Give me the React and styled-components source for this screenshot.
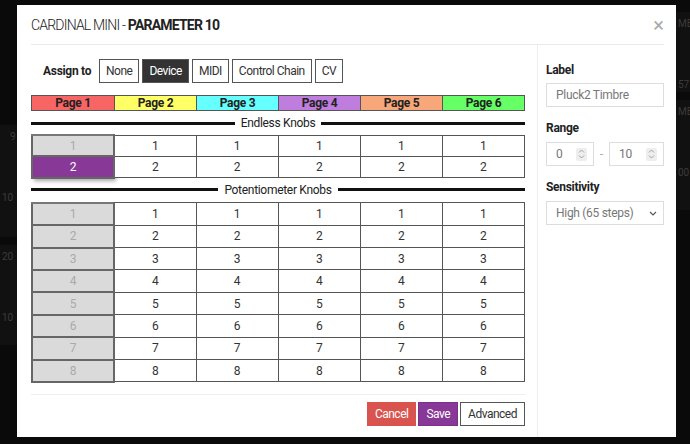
import React from "react";
import styled, { createGlobalStyle } from "styled-components";

const GlobalStyle = createGlobalStyle`
  html, body {
    margin: 0;
    padding: 0;
    background: #0a0a0a;
    font-family: Roboto, "Liberation Sans", sans-serif;
  }
  * { box-sizing: border-box; }
`;

const PAGES = [
  { name: "Page 1", color: "#f76565" },
  { name: "Page 2", color: "#ffff66" },
  { name: "Page 3", color: "#66ffff" },
  { name: "Page 4", color: "#bf7ddd" },
  { name: "Page 5", color: "#f7a779" },
  { name: "Page 6", color: "#66ff66" },
];

const Screen = styled.div`
  position: relative;
  width: 690px;
  height: 444px;
  overflow: hidden;
  background: #0a0a0a;
`;

/* pedalboard behind the dialog */
const Backdrop = styled.div`
  display: flex;
  justify-content: space-between;
  height: 100%;
`;

const BackColumn = styled.div`
  display: flex;
  flex-direction: column;
  width: ${(p) => p.$w}px;
  padding-top: ${(p) => p.$top}px;
  gap: 8px;
  overflow: hidden;
`;

const BackModule = styled.div`
  height: ${(p) => p.$h}px;
  background: #111;
  color: #3c3c3c;
  font-size: 10px;
  padding: 6px 2px;
  display: flex;
  flex-direction: column;
  gap: 50px;
  white-space: nowrap;
`;

const Overlay = styled.div`
  position: absolute;
  left: 17px;
  top: 5px;
  width: 659px;
  height: 432px;
  background: #fff;
  display: flex;
  flex-direction: column;
  padding: 0 12px 0 14px;
  color: #222;
`;

const Header = styled.div`
  height: 40px;
  display: flex;
  align-items: center;
  justify-content: space-between;
  border-bottom: 1px solid #e9e9e9;
`;

const Title = styled.h1`
  margin: 0;
  font-size: 14px;
  font-weight: 300;
  letter-spacing: -0.8px;
  color: #222;
  b { font-weight: 700; }
`;

const Close = styled.span`
  color: #aaa;
  font-size: 20px;
  line-height: 1;
`;

const Body = styled.div`
  flex: 1;
  display: flex;
`;

const Main = styled.div`
  width: 494px;
  display: flex;
  flex-direction: column;
`;

const AssignRow = styled.div`
  display: flex;
  align-items: center;
  margin-top: 14px;
  padding-left: 12px;
`;

const AssignLabel = styled.span`
  font-size: 12px;
  font-weight: 700;
  letter-spacing: -0.3px;
  width: 56px;
`;

const ToggleGroup = styled.div`
  display: flex;
  gap: 3px;
`;

const ToggleButton = styled.button`
  height: 24px;
  padding: 0 6px;
  font-family: inherit;
  font-size: 12px;
  letter-spacing: -0.5px;
  border: 1px solid #555;
  background: ${(p) => (p.$active ? "#333" : "#fff")};
  color: ${(p) => (p.$active ? "#fff" : "#333")};
`;

const PageBar = styled.div`
  display: grid;
  grid-template-columns: repeat(6, 1fr);
  border: 1px solid #555;
  margin-top: 12px;
  height: 16px;
`;

const PageCell = styled.div`
  background: ${(p) => p.$color};
  border-left: ${(p) => (p.$first ? "none" : "1px solid #555")};
  font-size: 12px;
  font-weight: 700;
  letter-spacing: -0.3px;
  color: #222;
  display: flex;
  align-items: center;
  justify-content: center;
`;

const Section = styled.div`
  display: flex;
  align-items: center;
  gap: 6px;
  margin: ${(p) => p.$m};
  font-size: 12px;
  letter-spacing: -0.3px;
  color: #222;
  &::before, &::after {
    content: "";
    flex: 1;
    height: 3px;
    background: #111;
  }
`;

const Grid = styled.table`
  border-collapse: collapse;
  width: 100%;
  table-layout: fixed;
  td { height: ${(p) => p.$rowH}px; }
`;

const Cell = styled.td`
  padding: 0;
  border: 1px solid #555;
  font-size: 12px;
  text-align: center;
  color: #333;
  background: #fff;
`;

const KnobCell = styled(Cell)`
  border: 2px solid #666;
  border-top-color: #777;
  background: ${(p) => (p.$selected ? "#883896" : "#dadada")};
  color: ${(p) => (p.$selected ? "#fff" : "#aaa")};
  box-shadow: ${(p) => (p.$selected ? "2px 3px 4px rgba(0,0,0,0.35)" : "none")};
`;

const Footer = styled.div`
  margin-top: 11px;
  border-top: 1px solid #eee;
  padding-top: 7px;
  display: flex;
  justify-content: flex-end;
  gap: 2px;
`;

const ActionButton = styled.button`
  height: 24px;
  padding: 0 7px;
  font-family: inherit;
  font-size: 12px;
  letter-spacing: -0.5px;
  border: 1px solid ${(p) => (p.$tone === "danger" ? "#d9534f" : p.$tone === "primary" ? "#7a2f88" : "#555")};
  background: ${(p) => (p.$tone === "danger" ? "#d9534f" : p.$tone === "primary" ? "#883896" : "#fff")};
  color: ${(p) => (p.$tone === "light" ? "#333" : "#fff")};
`;

const Side = styled.aside`
  margin-left: 12px;
  border-left: 1px solid #eee;
  padding: 18px 0 0 8px;
  flex: 1;
  display: flex;
  flex-direction: column;
`;

const FieldLabel = styled.div`
  font-size: 12px;
  font-weight: 700;
  letter-spacing: -0.3px;
  color: #222;
  margin: ${(p) => p.$m || "0"};
  height: 16px;
`;

const Field = styled.div`
  height: 24px;
  border: 1px solid #ddd;
  display: flex;
  align-items: center;
  justify-content: space-between;
  padding: 0 6px 0 9px;
  font-size: 12px;
  letter-spacing: -0.3px;
  color: #777;
  margin-top: ${(p) => p.$top || 0}px;
  width: ${(p) => (p.$w ? `${p.$w}px` : "auto")};
`;

const RangeRow = styled.div`
  display: flex;
  align-items: center;
`;

const Dash = styled.span`
  width: 15px;
  text-align: center;
  color: #aaa;
  font-size: 12px;
`;

const Spin = styled.span`
  width: 11px;
  height: 13px;
  background: #eee;
  border-radius: 2px;
  display: flex;
  align-items: center;
  justify-content: center;
`;

function SpinIcon() {
  return (
    <Spin>
      <svg width="7" height="10" viewBox="0 0 7 10" fill="none" stroke="#999" strokeWidth="0.9">
        <path d="M1 3.5 L3.5 1 L6 3.5" />
        <path d="M1 6.5 L3.5 9 L6 6.5" />
      </svg>
    </Spin>
  );
}

function KnobTable({ rows, selected, rowH }) {
  return (
    <Grid $rowH={rowH}>
      <tbody>
        {Array.from({ length: rows }, (_, i) => (
          <tr key={i}>
            <KnobCell $selected={selected === i + 1}>{i + 1}</KnobCell>
            {PAGES.slice(1).map((p) => (
              <Cell key={p.name}>{i + 1}</Cell>
            ))}
          </tr>
        ))}
      </tbody>
    </Grid>
  );
}

export default function App() {
  return (
    <Screen>
      <GlobalStyle />
      <Backdrop>
        <BackColumn $w={17} $top={125}>
          <BackModule $h={112}>
            <span style={{ paddingLeft: 8 }}>9</span>
            <span>10</span>
          </BackModule>
          <BackModule $h={100}>
            <span>20</span>
            <span>10</span>
          </BackModule>
        </BackColumn>
        <BackColumn $w={14} $top={12}>
          <BackModule $h={80}>
            <span>ME</span>
            <span>57</span>
          </BackModule>
          <BackModule $h={110}>
            <span>ME</span>
            <span>00</span>
          </BackModule>
        </BackColumn>
      </Backdrop>

      <Overlay>
        <Header>
          <Title>
            CARDINAL MINI - <b>PARAMETER 10</b>
          </Title>
          <Close>×</Close>
        </Header>
        <Body>
          <Main>
            <AssignRow>
              <AssignLabel>Assign to</AssignLabel>
              <ToggleGroup>
                {["None", "Device", "MIDI", "Control Chain", "CV"].map((t) => (
                  <ToggleButton key={t} $active={t === "Device"}>
                    {t}
                  </ToggleButton>
                ))}
              </ToggleGroup>
            </AssignRow>

            <PageBar>
              {PAGES.map((p, i) => (
                <PageCell key={p.name} $color={p.color} $first={i === 0}>
                  {p.name}
                </PageCell>
              ))}
            </PageBar>

            <Section $m="5px 0 4px">Endless Knobs</Section>
            <KnobTable rows={2} selected={2} rowH={21.4} />

            <Section $m="4px 0 5px">Potentiometer Knobs</Section>
            <KnobTable rows={8} rowH={22.4} />

            <Footer>
              <ActionButton $tone="danger">Cancel</ActionButton>
              <ActionButton $tone="primary">Save</ActionButton>
              <ActionButton $tone="light">Advanced</ActionButton>
            </Footer>
          </Main>

          <Side>
            <FieldLabel>Label</FieldLabel>
            <Field $top={4}>Pluck2 Timbre</Field>
            <FieldLabel $m="14px 0 5px">Range</FieldLabel>
            <RangeRow>
              <Field $w={48}>
                0 <SpinIcon />
              </Field>
              <Dash>-</Dash>
              <Field $w={55}>
                10 <SpinIcon />
              </Field>
            </RangeRow>
            <FieldLabel $m="14px 0 5px">Sensitivity</FieldLabel>
            <Field>
              High (65 steps)
              <svg width="8" height="5" viewBox="0 0 8 5" fill="none" stroke="#555" strokeWidth="1.1">
                <path d="M1 1 L4 4 L7 1" />
              </svg>
            </Field>
          </Side>
        </Body>
      </Overlay>
    </Screen>
  );
}
